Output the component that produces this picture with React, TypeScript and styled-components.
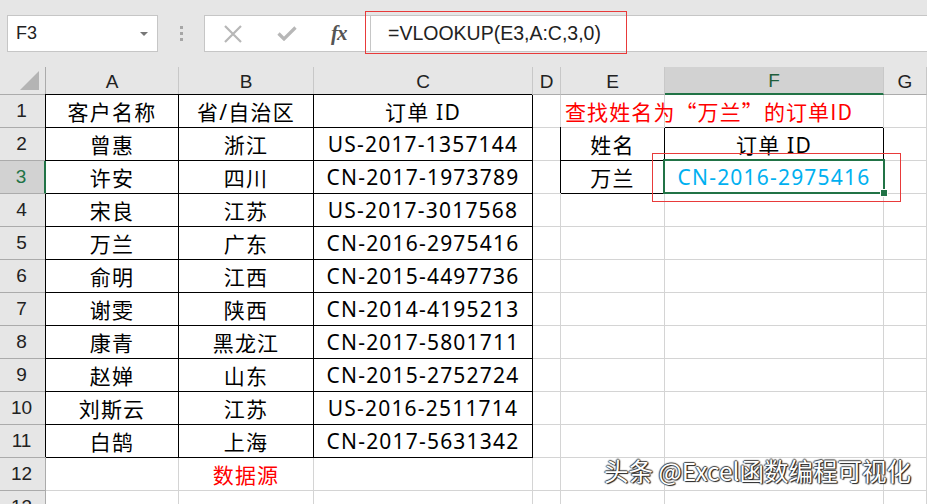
import React from "react";
import styled, { createGlobalStyle, css } from "styled-components";

const Global = createGlobalStyle`
  html, body { margin: 0; padding: 0; background: #ffffff; overflow: hidden; }
  #root { width: 927px; height: 504px; overflow: hidden; }
`;

const Page = styled.div`
  position: relative;
  width: 927px;
  height: 504px;
  overflow: hidden;
  background: #ffffff;
`;

const Toolbar = styled.div`
  height: 67px;
  background: #e6e6e6;
  display: flex;
  align-items: flex-start;
  padding-top: 15px;
  box-sizing: border-box;
  padding-left: 7px;
`;

const NameBox = styled.div`
  width: 151px;
  height: 37px;
  box-sizing: border-box;
  background: #ffffff;
  border: 1px solid #c6c6c6;
  display: flex;
  align-items: center;
  justify-content: space-between;
  padding: 0 9px 0 8px;
  font-family: "Liberation Sans", Arial, sans-serif;
  font-size: 18px;
  color: #222;
`;

const Caret = styled.span`
  width: 0;
  height: 0;
  border-left: 4px solid transparent;
  border-right: 4px solid transparent;
  border-top: 4px solid #777;
`;

const Grip = styled.div`
  width: 46px;
  height: 37px;
  display: flex;
  flex-direction: column;
  align-items: center;
  justify-content: center;
  gap: 3px;
`;

const Dot = styled.span`
  width: 3px;
  height: 3px;
  background: #a6a6a6;
`;

const FxBox = styled.div`
  width: 166px;
  height: 37px;
  box-sizing: border-box;
  background: #ffffff;
  border: 1px solid #c6c6c6;
  border-right: none;
  display: flex;
  align-items: center;
  padding-left: 18px;
  gap: 34px;
`;

const FxText = styled.span`
  font-family: "Liberation Serif", "Times New Roman", serif;
  font-style: italic;
  font-weight: bold;
  font-size: 21px;
  color: #555;
  letter-spacing: -1px;
`;

const FormulaInput = styled.div`
  flex: 1;
  height: 37px;
  box-sizing: border-box;
  background: #ffffff;
  border: 1px solid #c6c6c6;
  border-right: none;
  display: flex;
  align-items: center;
  padding-left: 17px;
  font-family: "Liberation Sans", Arial, sans-serif;
  font-size: 19.5px;
  color: #222;
`;

const RedFrame = styled.div<{ $l: number; $t: number; $w: number; $h: number }>`
  position: absolute;
  left: ${(p) => p.$l}px;
  top: ${(p) => p.$t}px;
  width: ${(p) => p.$w}px;
  height: ${(p) => p.$h}px;
  box-sizing: border-box;
  border: 1.5px solid #e83a3a;
  pointer-events: none;
  z-index: 5;
`;

const Sheet = styled.div`
  display: grid;
  grid-template-columns: 46px 133px 135px 219px 28px 104px 219px 1fr;
  grid-template-rows: 28px repeat(13, 33px);
`;

const Corner = styled.div`
  background: #e6e6e6;
  border-right: 1px solid #ababab;
  border-bottom: 1px solid #ababab;
  box-sizing: border-box;
  display: flex;
  align-items: flex-end;
  justify-content: flex-end;
  padding: 0 6px 4px 0;
`;

const CornerTri = styled.span`
  width: 0;
  height: 0;
  border-left: 19px solid transparent;
  border-bottom: 19px solid #b4b4b4;
`;

const ColHead = styled.div<{ $sel?: boolean }>`
  box-sizing: border-box;
  background: ${(p) => (p.$sel ? "#d2d2d2" : "#e6e6e6")};
  border-right: 1px solid #c8c8c8;
  border-bottom: ${(p) => (p.$sel ? "2px solid #217346" : "1px solid #ababab")};
  display: flex;
  align-items: center;
  justify-content: center;
  padding-top: 2px;
  font-family: "Liberation Sans", Arial, sans-serif;
  font-size: 19px;
  color: ${(p) => (p.$sel ? "#1e5e3c" : "#222")};
`;

const RowHead = styled.div<{ $sel?: boolean }>`
  box-sizing: border-box;
  background: ${(p) => (p.$sel ? "#d2d2d2" : "#e6e6e6")};
  border-right: ${(p) => (p.$sel ? "2px solid #217346" : "1px solid #ababab")};
  border-bottom: 1px solid #ababab;
  display: flex;
  align-items: center;
  justify-content: center;
  padding-right: 2px;
  font-family: "Liberation Sans", Arial, sans-serif;
  font-size: 19px;
  color: ${(p) => (p.$sel ? "#217346" : "#222")};
  ${(p) =>
    p.$sel &&
    css`
      position: relative;
      z-index: 2;
    `}
`;

const Cell = styled.div<{ $boxed?: boolean; $color?: string; $left?: boolean }>`
  position: relative;
  box-sizing: border-box;
  background: #ffffff;
  border-right: 1px solid ${(p) => (p.$boxed ? "#000" : "#d4d4d4")};
  border-bottom: 1px solid ${(p) => (p.$boxed ? "#000" : "#d4d4d4")};
  ${(p) =>
    p.$boxed &&
    css`
      box-shadow: -1px -1px 0 0 #000;
    `}
  display: flex;
  align-items: center;
  justify-content: ${(p) => (p.$left ? "flex-start" : "center")};
  padding-left: ${(p) => (p.$left ? "4px" : "0")};
  white-space: nowrap;
  overflow: visible;
  font-family: ${(p) =>
    p.$left ? `"Noto Sans CJK SC", sans-serif` : `"Noto Sans", "Noto Sans CJK SC", sans-serif`};
  font-size: 21px;
  letter-spacing: ${(p) => (p.$left ? "1.1px" : "1.2px")};
  color: ${(p) => p.$color || "#000"};
  z-index: ${(p) => (p.$left ? 3 : "auto")};
`;

const Selection = styled.div`
  position: absolute;
  left: -2px;
  top: -2px;
  right: -2px;
  bottom: -1px;
  border: 2px solid #217346;
  pointer-events: none;
  z-index: 4;
`;

const Handle = styled.span`
  position: absolute;
  right: -5px;
  bottom: -5px;
  width: 6px;
  height: 6px;
  background: #217346;
  border: 1px solid #fff;
`;

const Watermark = styled.div`
  position: absolute;
  right: 16px;
  top: 453px;
  font-family: "Noto Sans CJK SC", "Noto Sans", sans-serif;
  font-size: 24.5px;
  color: #ffffff;
  text-shadow: 1px 1px 1px #222, -1px 0 1px #444, 0 -1px 1px #444, 1px 0 1px #333;
  white-space: nowrap;
  z-index: 6;
`;

const cols = ["A", "B", "C", "D", "E", "F", "G"];

const data: [string, string, string][] = [
  ["客户名称", "省/自治区", "订单 ID"],
  ["曾惠", "浙江", "US-2017-1357144"],
  ["许安", "四川", "CN-2017-1973789"],
  ["宋良", "江苏", "US-2017-3017568"],
  ["万兰", "广东", "CN-2016-2975416"],
  ["俞明", "江西", "CN-2015-4497736"],
  ["谢雯", "陕西", "CN-2014-4195213"],
  ["康青", "黑龙江", "CN-2017-5801711"],
  ["赵婵", "山东", "CN-2015-2752724"],
  ["刘斯云", "江苏", "US-2016-2511714"],
  ["白鹄", "上海", "CN-2017-5631342"],
];

function renderRow(r: number) {
  const cells: React.ReactNode[] = [];
  cells.push(
    <RowHead key="h" $sel={r === 3}>
      {r}
    </RowHead>
  );
  const inTable = r >= 1 && r <= 11;
  const d = inTable ? data[r - 1] : null;
  for (let c = 0; c < 3; c++) {
    let content: React.ReactNode = d ? d[c] : "";
    let color: string | undefined;
    if (r === 12 && c === 1) {
      content = "数据源";
      color = "#ff0000";
    }
    cells.push(
      <Cell key={cols[c]} $boxed={inTable} $color={color}>
        {content}
      </Cell>
    );
  }
  cells.push(<Cell key="D" />);
  if (r === 1) {
    cells.push(
      <Cell key="E" $left $color="#ff0000">
        查找姓名为“万兰”的订单ID
      </Cell>
    );
  } else if (r === 2) {
    cells.push(
      <Cell key="E" $boxed>
        姓名
      </Cell>
    );
  } else if (r === 3) {
    cells.push(
      <Cell key="E" $boxed>
        万兰
      </Cell>
    );
  } else {
    cells.push(<Cell key="E" />);
  }
  if (r === 2) {
    cells.push(
      <Cell key="F" $boxed>
        订单 ID
      </Cell>
    );
  } else if (r === 3) {
    cells.push(
      <Cell key="F" $boxed $color="#00b0f0">
        CN-2016-2975416
        <Selection>
          <Handle />
        </Selection>
      </Cell>
    );
  } else {
    cells.push(<Cell key="F" />);
  }
  cells.push(<Cell key="G" />);
  return cells;
}

export default function App() {
  return (
    <Page>
      <Global />
      <Toolbar>
        <NameBox>
          F3
          <Caret />
        </NameBox>
        <Grip>
          <Dot />
          <Dot />
          <Dot />
        </Grip>
        <FxBox>
          <svg width="20" height="18" viewBox="0 0 20 18">
            <path d="M2 1 L18 17 M18 1 L2 17" stroke="#b7b7b7" strokeWidth="2.2" fill="none" />
          </svg>
          <svg width="20" height="15" viewBox="0 0 20 15">
            <path d="M1.5 7.5 L7 13 L18.5 1.5" stroke="#b7b7b7" strokeWidth="3.2" fill="none" />
          </svg>
          <FxText>fx</FxText>
        </FxBox>
        <FormulaInput>=VLOOKUP(E3,A:C,3,0)</FormulaInput>
      </Toolbar>
      <RedFrame $l={365} $t={11} $w={262} $h={43} />
      <Sheet>
        <Corner>
          <CornerTri />
        </Corner>
        {cols.map((c) => (
          <ColHead key={c} $sel={c === "F"}>
            {c}
          </ColHead>
        ))}
        {Array.from({ length: 13 }, (_, i) => i + 1).map((r) => (
          <React.Fragment key={r}>{renderRow(r)}</React.Fragment>
        ))}
      </Sheet>
      <RedFrame $l={652} $t={153} $w={249} $h={49} />
      <Watermark>头条 @Excel函数编程可视化</Watermark>
    </Page>
  );
}
